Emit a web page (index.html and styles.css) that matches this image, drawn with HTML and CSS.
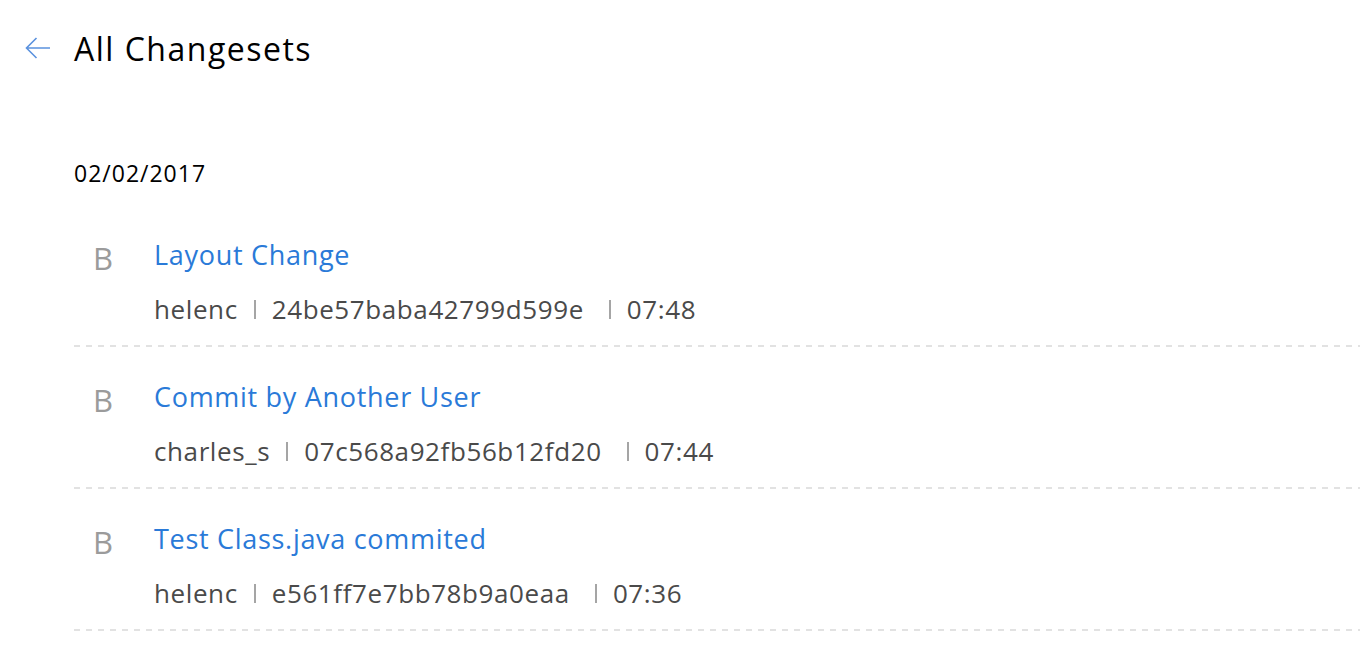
FILE: index.html
```html
<!DOCTYPE html>
<html lang="en">
<head>
	<title>All Changesets</title>
	<link rel="stylesheet" href="styles.css">
</head>
<body>

<div class="header">
	<a class="back" href="#">
		<svg width="26" height="22" viewBox="0 0 26 22"><path d="M25 11H1.5M11.5 1L1.5 11l10 10" fill="none" stroke="#5b92de" stroke-width="1.6"/></svg>
	</a>
	<h1>All Changesets</h1>
</div>

<div class="day">
	<div class="date">02/02/2017</div>

	<div class="changeset">
		<div class="branch">B</div>
		<div class="info">
			<a class="name" href="#">Layout Change</a>
			<div class="meta">
				<span>helenc</span><span class="sep"></span><span>24be57baba42799d599e</span><span class="sep wide"></span><span>07:48</span>
			</div>
		</div>
	</div>

	<div class="changeset">
		<div class="branch">B</div>
		<div class="info">
			<a class="name" href="#">Commit by Another User</a>
			<div class="meta">
				<span>charles_s</span><span class="sep"></span><span>07c568a92fb56b12fd20</span><span class="sep wide"></span><span>07:44</span>
			</div>
		</div>
	</div>

	<div class="changeset">
		<div class="branch">B</div>
		<div class="info">
			<a class="name" href="#">Test Class.java commited</a>
			<div class="meta">
				<span>helenc</span><span class="sep"></span><span>e561ff7e7bb78b9a0eaa</span><span class="sep wide"></span><span>07:36</span>
			</div>
		</div>
	</div>
</div>

</body>
</html>
```

FILE: styles.css
```css
body {
	margin: 0;
	font-family: "Open Sans", Lato, sans-serif;
	background: #fff;
	color: #000;
}

.header {
	display: flex;
	align-items: center;
	height: 96px;
	padding-left: 25px;
}

.back {
	display: flex;
	width: 49px;
}

h1 {
	margin: 0;
	font-size: 32px;
	font-weight: normal;
	letter-spacing: 1.5px;
}

.day {
	padding: 62px 0 0 74px;
}

.date {
	font-size: 23px;
	line-height: 30px;
	letter-spacing: 1px;
	margin-bottom: 17px;
}

.changeset {
	display: flex;
	padding: 34px 0 23px;
	background: repeating-linear-gradient(to right, #e2e2e2 0 6px, transparent 6px 12px) left bottom / 100% 2px no-repeat;
}

.branch {
	width: 80px;
	padding: 3px 0 0 19px;
	box-sizing: border-box;
	font-size: 31px;
	line-height: 32px;
	color: #9b9b9b;
}

.info {
	display: flex;
	flex-direction: column;
}

.name {
	color: #2a7ad8;
	text-decoration: none;
	font-size: 27px;
	line-height: 32px;
	letter-spacing: 0.7px;
}

.meta {
	display: flex;
	align-items: center;
	font-size: 26px;
	line-height: 30px;
	letter-spacing: 0.6px;
	color: #4a4a4a;
	margin-top: 23px;
}

.sep {
	width: 2px;
	height: 19px;
	background: #a5a5a5;
	margin: 0 16px;
}

.sep.wide {
	margin-left: 25px;
}
```
